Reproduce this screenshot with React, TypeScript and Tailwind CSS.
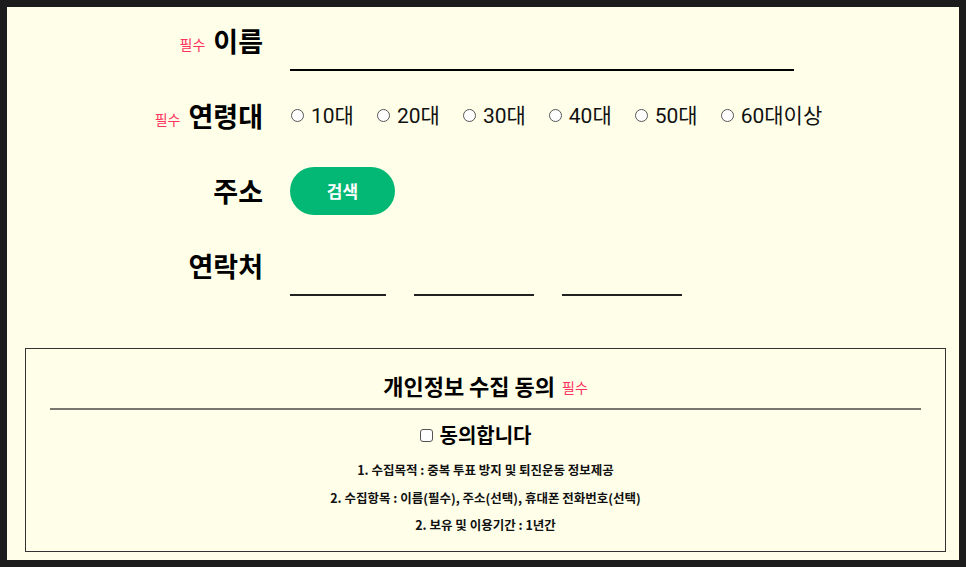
import React from 'react';

const FONT = { fontFamily: '"Noto Sans CJK KR", "Noto Sans", sans-serif' };
const LATIN = { fontFamily: 'Roboto, "Noto Sans CJK KR", sans-serif' };

function Required({ className = '' }: { className?: string }) {
  return <span className={`text-[14px] font-normal text-[#ff3360] ${className}`}>필수</span>;
}

function Label({ text, required }: { text: string; required?: boolean }) {
  return (
    <div className="w-[256px] shrink-0 flex items-center justify-end gap-[8px] text-right">
      {required && <Required className="mt-[6px]" />}
      <span className="text-[27px] font-bold leading-[36px] text-black">{text}</span>
    </div>
  );
}

const ages = ['10대', '20대', '30대', '40대', '50대', '60대이상'];

export default function App() {
  return (
    <div style={FONT} className="h-[567px] w-full border-[7px] border-[#1c1c1c] bg-[#ffffe9] text-black">
      <div className="flex flex-col pt-[16px]">
        {/* 이름 */}
        <div className="flex items-start gap-[27px]">
          <Label text="이름" required />
          <div className="h-[48px] w-[504px] border-b-2 border-black" />
        </div>

        {/* 연령대 */}
        <div className="mt-[27px] flex items-center gap-[27px]">
          <Label text="연령대" required />
          <div className="flex items-center">
            {ages.map((a) => (
              <label
                key={a}
                style={LATIN}
                className="mr-[22px] flex items-center gap-[7px] text-[21px] leading-[36px] text-[#111]"
              >
                <span className="ml-px mt-[-2px] h-[13px] w-[13px] rounded-full border border-[#555] bg-white" />
                {a}
              </label>
            ))}
          </div>
        </div>

        {/* 주소 */}
        <div className="mt-[33px] flex items-center gap-[27px]">
          <Label text="주소" />
          <button className="h-[48px] w-[105px] rounded-full bg-[#03b775] text-[17px] font-bold text-white">
            검색
          </button>
        </div>

        {/* 연락처 */}
        <div className="mt-[33px] flex items-start gap-[27px]">
          <Label text="연락처" />
          <div className="flex gap-[28px]">
            <div className="h-[48px] w-[96px] border-b-2 border-[#222]" />
            <div className="h-[48px] w-[120px] border-b-2 border-[#222]" />
            <div className="h-[48px] w-[120px] border-b-2 border-[#222]" />
          </div>
        </div>

        {/* 개인정보 수집 동의 */}
        <div className="ml-[18px] mr-[13px] mt-[52px] h-[204px] border border-[#333] px-[24px] pt-[21px]">
          <div className="flex items-center justify-center gap-[7px]">
            <span className="text-[22px] font-bold leading-[30px]">개인정보 수집 동의</span>
            <Required className="mt-[5px]" />
          </div>
          <div className="mt-[8px] h-[2px] bg-[#77776f]" />
          <div className="mt-[11px] mr-[20px] flex items-center justify-center gap-[7px]">
            <span className="h-[13px] w-[13px] rounded-[3px] border border-[#555] bg-white" />
            <span className="text-[20px] font-bold leading-[28px]">동의합니다</span>
          </div>
          <div className="mt-[7px] flex flex-col items-center text-[12.5px] font-bold leading-[27.5px] text-[#111]">
            <p>1. 수집목적 : 중복 투표 방지 및 퇴진운동 정보제공</p>
            <p>2. 수집항목 : 이름(필수), 주소(선택), 휴대폰 전화번호(선택)</p>
            <p>2. 보유 및 이용기간 : 1년간</p>
          </div>
        </div>
      </div>
    </div>
  );
}
